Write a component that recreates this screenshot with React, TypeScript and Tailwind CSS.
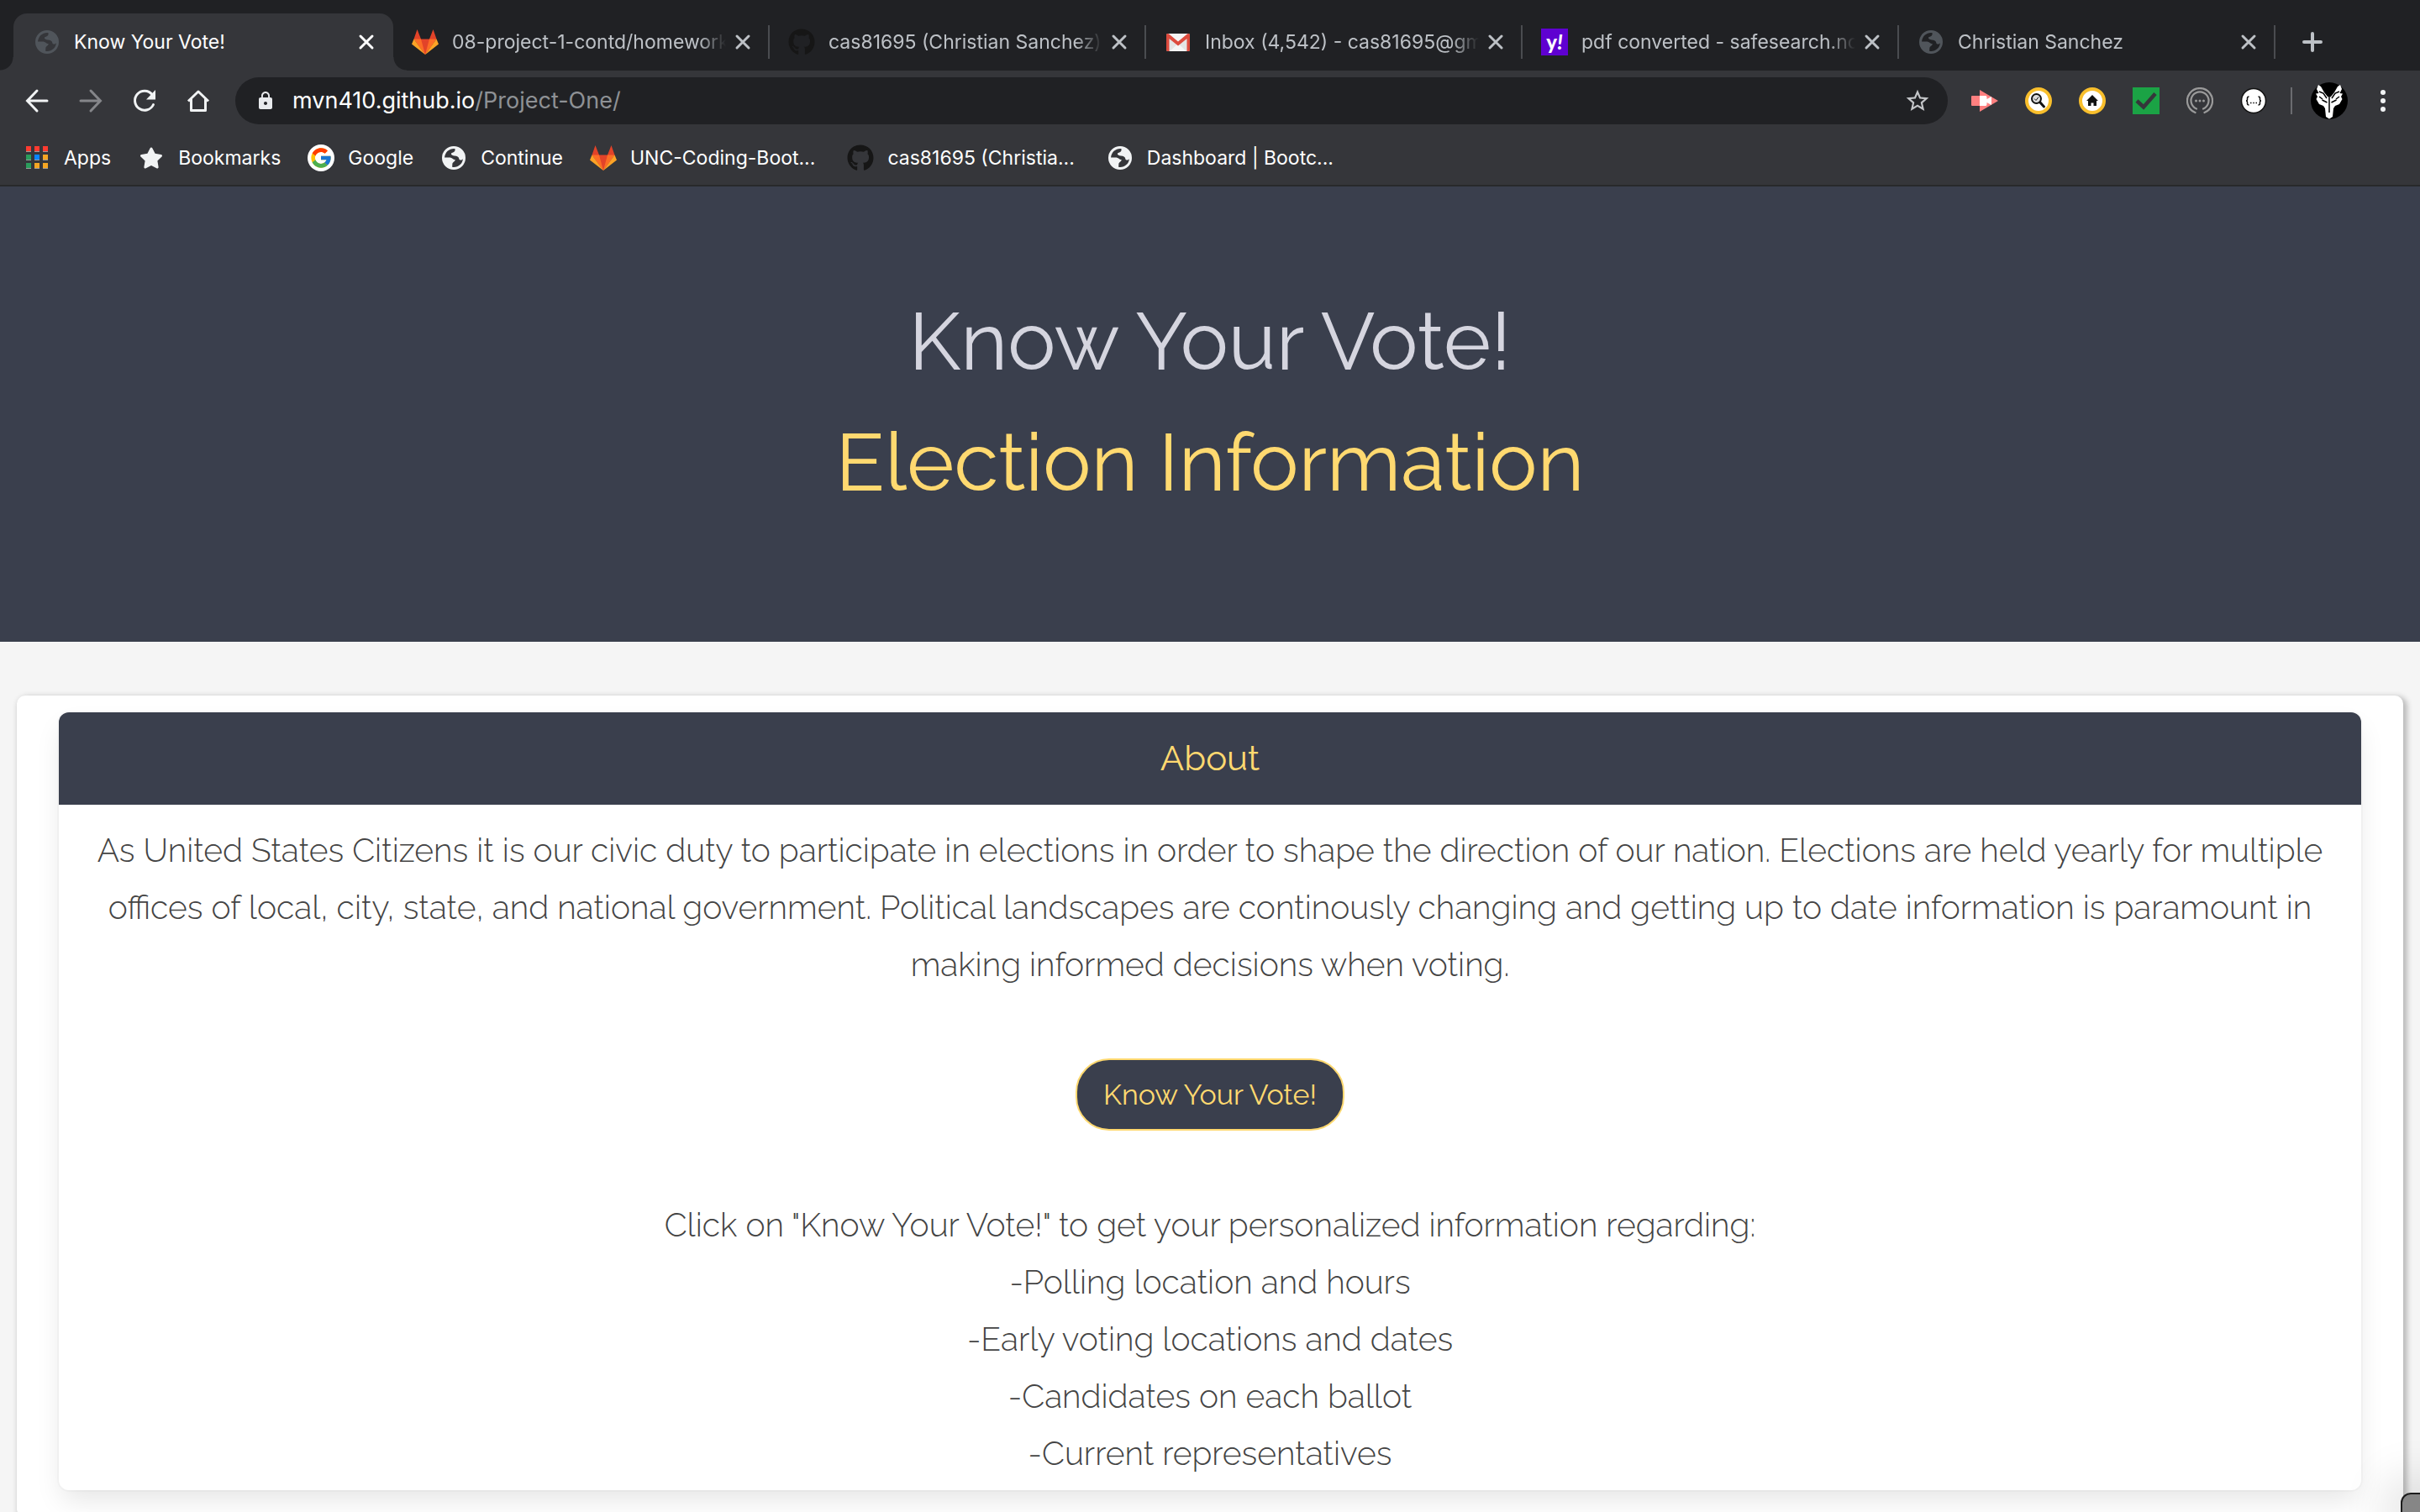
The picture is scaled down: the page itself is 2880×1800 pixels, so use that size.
import type { ReactNode } from "react";
import { FaGithub, FaStar } from "react-icons/fa";
import { FcGoogle } from "react-icons/fc";
import { MdLock, MdStarBorder } from "react-icons/md";

function Globe({ className }: { className: string }) {
  return (
    <svg viewBox="0 0 24 24" className={className} aria-hidden="true">
      <path
        fill="currentColor"
        fillRule="evenodd"
        d="M12 0a12 12 0 1 0 0 24 12 12 0 0 0 0-24zM13.2 2.6C8 2 3.200 5.600 2.600 11.500H7.500C10.500 11.500 11 13.600 13.400 13.800C13.800 15.600 10.800 16.200 10.600 18.200L10.400 21.200C16 22.200 21 18.200 21.400 12.800C20.500 14.600 17.600 14.600 17.400 12.800C17.200 10.800 15.400 10 12.800 9.800C9 9.500 8.400 7 10.800 6.600C12.800 6.300 13.800 4.600 13.200 2.600z"
      />
    </svg>
  );
}

function Gitlab() {
  return (
    <svg viewBox="0 0 32 32" className="size-8" aria-hidden="true">
      <path fill="#e24329" d="M6.500 1 11 12.500H21L25.500 1 29.500 12.500 16 31 2.500 12.500z" />
      <path fill="#fc6d26" d="M2.500 12.500H11L16 31zM29.500 12.500H21L16 31z" />
      <path fill="#fca326" d="M2.500 12.500 0 18.500 16 31zM29.500 12.500 32 18.500 16 31z" />
    </svg>
  );
}

function Gmail() {
  return (
    <svg viewBox="0 0 32 32" className="size-8" aria-hidden="true">
      <rect x="2" y="6" width="28" height="21" rx="2" fill="#e4e4e4" />
      <path d="M6 27 16 18 26 27z" fill="#f5f5f5" />
      <path d="M4 6H28L16 16z" fill="#f5f5f5" />
      <path d="M2 8C2 6 4 5.500 5.500 6.800L16 15.500 26.500 6.800C28 5.500 30 6 30 8V25.500Q30 27 28 27H26.500V12L16 20.500 5.500 12V27H4Q2 27 2 25.500z" fill="#dd4b3e" />
    </svg>
  );
}

function Yahoo() {
  return (
    <span className="flex size-8 items-center justify-center bg-[#5f01d1] font-['Lato',sans-serif] text-2xl leading-none font-black text-white">
      y<i>!</i>
    </span>
  );
}

function Cross() {
  return (
    <svg viewBox="0 0 32 32" className="size-8" aria-hidden="true">
      <path d="M9 9 23 23M23 9 9 23" stroke="currentColor" strokeWidth="3" strokeLinecap="round" />
    </svg>
  );
}

function AppsGrid() {
  const colors = ["#ff3b30", "#ff3b30", "#ff3b30", "#2a9d5c", "#0a84ff", "#f5a623", "#2a9d5c", "#f5a623", "#f5a623"];
  return (
    <svg viewBox="0 0 32 32" className="size-8" aria-hidden="true">
      {colors.map((c, i) => (
        <g key={i}>
          <rect x={3 + (i % 3) * 10} y={2 + Math.floor(i / 3) * 10} width="6" height="7" fill="#9a9a9a" />
          <rect x={3 + (i % 3) * 10} y={2 + Math.floor(i / 3) * 10} width="6" height="6" fill={c} />
        </g>
      ))}
    </svg>
  );
}

function TabItem({ icon, title }: { icon: ReactNode; title: string }) {
  return (
    <div className="flex h-full min-w-0 flex-1 items-center py-4">
      <div className="flex h-10 min-w-0 flex-1 items-center border-r-2 border-[#4a4c50] pr-3.5 pl-[22px] text-[#bdc1c6]">
        <span className="shrink-0">{icon}</span>
        <a href="#" className="ml-4 min-w-0 flex-1 overflow-hidden mask-r-from-90% whitespace-nowrap">
          {title}
        </a>
        <button type="button" aria-label={"Close " + title} className="ml-1 shrink-0">
          <Cross />
        </button>
      </div>
    </div>
  );
}

function TabStrip() {
  return (
    <div className="flex h-[84px] shrink-0 items-end bg-[#202124] pl-4 text-[23px]">
      <div className="relative flex h-[68px] w-[452px] shrink-0 items-center rounded-t-2xl bg-[#35363a] pr-4 pl-6 text-white">
        <span className="absolute bottom-0 -left-4 size-4 bg-[radial-gradient(circle_at_0_0,#202124_15px,#35363a_16px)]" />
        <span className="absolute -right-4 bottom-0 size-4 bg-[radial-gradient(circle_at_100%_0,#202124_15px,#35363a_16px)]" />
        <span className="flex size-8 items-center justify-center">
          <Globe className="size-7 text-[#50555b]" />
        </span>
        <a href="#" className="ml-4 flex-1">Know Your Vote!</a>
        <button type="button" aria-label="Close Know Your Vote!">
          <Cross />
        </button>
      </div>
      <div className="flex h-[68px] max-w-[2240px] min-w-0 flex-1 items-center">
        <TabItem icon={<Gitlab />} title="08-project-1-contd/homework" />
        <TabItem icon={<FaGithub className="size-8 text-[#161616]" />} title="cas81695 (Christian Sanchez)" />
        <TabItem icon={<Gmail />} title="Inbox (4,542) - cas81695@gm" />
        <TabItem icon={<Yahoo />} title="pdf converted - safesearch.no" />
        <TabItem
          icon={
            <span className="flex size-8 items-center justify-center">
              <Globe className="size-7 text-[#50555b]" />
            </span>
          }
          title="Christian Sanchez"
        />
      </div>
      <button type="button" aria-label="New tab" className="ml-7 flex h-[68px] items-center text-[#bdc1c6]">
        <svg viewBox="0 0 32 32" className="size-8" aria-hidden="true">
          <path d="M16 6V26M6 16H26" stroke="currentColor" strokeWidth="4" strokeLinecap="round" />
        </svg>
      </button>
    </div>
  );
}

function NavIcon({ label, dim, children }: { label: string; dim?: boolean; children: ReactNode }) {
  return (
    <button type="button" aria-label={label} className={dim ? "text-[#85868a]" : "text-[#f1f3f4]"}>
      <svg viewBox="0 0 32 32" className="size-8" fill="none" stroke="currentColor" strokeWidth="3" aria-hidden="true">
        {children}
      </svg>
    </button>
  );
}

function Ext({ label, children }: { label: string; children: ReactNode }) {
  return (
    <button type="button" aria-label={label}>
      <svg viewBox="0 0 32 32" className="size-8" aria-hidden="true">
        {children}
      </svg>
    </button>
  );
}

function Toolbar() {
  return (
    <div className="flex h-[72px] shrink-0 items-center px-7">
      <div className="flex shrink-0 gap-8">
        <NavIcon label="Back">
          <path d="M28 16H5M16 4 4.500 16 16 28" strokeLinecap="round" />
        </NavIcon>
        <NavIcon label="Forward" dim>
          <path d="M4 16H27M16 4 27.500 16 16 28" strokeLinecap="round" />
        </NavIcon>
        <NavIcon label="Reload">
          <path d="M26.500 20.500A11.500 11.500 0 1 1 25 8.500" strokeLinecap="round" />
          <path d="M29 3V14.500H18z" fill="currentColor" stroke="none" />
        </NavIcon>
        <NavIcon label="Home">
          <path d="M4 16.500 16 5 28 16.500M7.500 14V27.500H24.500V14" strokeLinejoin="round" />
        </NavIcon>
      </div>
      <div className="ml-7 flex h-14 min-w-0 flex-1 items-center rounded-full bg-[#202124] px-5">
        <span className="flex size-8 shrink-0 items-center justify-center">
          <MdLock className="size-6 text-[#e8eaed]" />
        </span>
        <a href="#" className="ml-4 flex-1 text-[27px] text-[#8e9195]">
          <span className="text-white">mvn410.github.io</span>/Project-One/
        </a>
        <button type="button" aria-label="Bookmark this page">
          <MdStarBorder className="size-8 text-[#c4c6c9]" />
        </button>
      </div>
      <div className="ml-7 flex shrink-0 items-center gap-8">
        <Ext label="Screen recorder">
          <path d="M10 3 32 16 10 29z" fill="#ff8080" />
          <path d="M1 10H10V22H1Q0 22 0 21V11Q0 10 1 10z" fill="#ff8080" />
          <path d="M10 10H17Q18.500 10 18.500 12V14L24 11V21L18.500 18V20Q18.500 22 17 22H10z" fill="#fff" />
        </Ext>
        <Ext label="Safe search">
          <circle cx="16" cy="16" r="14" fill="#fff" stroke="#f9bf2c" strokeWidth="4" />
          <circle cx="13.500" cy="13.500" r="5.500" fill="#ddd" stroke="#111" strokeWidth="2" />
          <path d="M11 13.500 13 15.500 16 11.500" fill="none" stroke="#111" strokeWidth="1" />
          <path d="M18 18 22.500 23" stroke="#111" strokeWidth="3" strokeLinecap="round" />
        </Ext>
        <Ext label="Home page">
          <circle cx="16" cy="16" r="14" fill="#fff" stroke="#f9bf2c" strokeWidth="4" />
          <path d="M16 9 23 16H21V22H17.500V18.500H14.500V22H11V16H9z" fill="#111" />
        </Ext>
        <Ext label="Safe web">
          <path d="M0 0H32V32H0z" fill="#1ba345" />
          <path d="M5 16 13 23.500 27 7.500" fill="none" stroke="#35363a" strokeWidth="4.500" />
        </Ext>
        <Ext label="Messages">
          <g fill="none" stroke="#9a9a9a" strokeWidth="2.200" strokeLinecap="round">
            <path d="M10.500 30A15 15 0 1 1 21.500 30" />
            <path d="M12 25.500A10.500 10.500 0 1 1 20 25.500" />
          </g>
          <g fill="#9a9a9a">
            <circle cx="11.500" cy="16" r="1.500" />
            <circle cx="16" cy="16" r="1.500" />
            <circle cx="20.500" cy="16" r="1.500" />
          </g>
        </Ext>
        <Ext label="JSON viewer">
          <circle cx="16" cy="16" r="14.500" fill="#fff" stroke="#111" strokeWidth="1.500" />
          <g fill="none" stroke="#111" strokeWidth="1.500">
            <path d="M10.500 11Q8.500 11 8.500 13V14.500Q8.500 16 7 16 8.500 16 8.500 17.500V19Q8.500 21 10.500 21M21.500 11Q23.500 11 23.500 13V14.500Q23.500 16 25 16 23.500 16 23.500 17.500V19Q23.500 21 21.500 21" />
            <path d="M12 18.500H13.500M15.300 18.500H16.800M18.500 18.500H20" />
          </g>
        </Ext>
      </div>
      <span className="ml-7 h-8 w-[2px] shrink-0 bg-[#6b6c70]" />
      <button type="button" aria-label="Profile" className="ml-[22px] shrink-0">
        <svg viewBox="0 0 44 44" className="size-11" aria-hidden="true">
          <circle cx="22" cy="22" r="22" fill="#000" />
          <path
            fill="#fff"
            d="M9 3 12 5 16 12 20 17 22 18 24 17 28 12 32 5 35 3 37 8 34.500 13 38 13.500 36 17 37.500 20 34 26 29 28 27 31 26 41 22 43.500 18 41 17 31 15 28 10 26 6.500 20 8 17 6 13.500 9.500 13 7 8z"
          />
          <path
            fill="none"
            stroke="#000"
            strokeWidth="1.500"
            d="M22 18V36M10 11 15 13 19 19M34 11 29 13 25 19M13.500 21 19.500 24M30.500 21 24.500 24M10 17 14 20M34 17 30 20"
          />
        </svg>
      </button>
      <button type="button" aria-label="Menu" className="ml-[26px] shrink-0 text-[#f1f3f4]">
        <svg viewBox="0 0 32 32" className="size-8" fill="currentColor" aria-hidden="true">
          <circle cx="16" cy="6" r="3" />
          <circle cx="16" cy="16" r="3" />
          <circle cx="16" cy="26" r="3" />
        </svg>
      </button>
    </div>
  );
}

const bookmarks: { label: string; icon: ReactNode; long?: boolean }[] = [
  { label: "Apps", icon: <AppsGrid /> },
  { label: "Bookmarks", icon: <FaStar className="size-7 text-[#f1f3f4]" /> },
  {
    label: "Google",
    icon: (
      <span className="flex size-8 items-center justify-center rounded-full bg-white">
        <FcGoogle className="size-7" />
      </span>
    ),
  },
  { label: "Continue", icon: <Globe className="size-7 text-[#f1f3f4]" /> },
  { label: "UNC-Coding-Boot...", icon: <Gitlab />, long: true },
  { label: "cas81695 (Christia...", icon: <FaGithub className="size-8 text-[#161616]" />, long: true },
  { label: "Dashboard | Bootc...", icon: <Globe className="size-7 text-[#f1f3f4]" />, long: true },
];

function BookmarksBar() {
  return (
    <nav aria-label="Bookmarks" className="flex h-[66px] shrink-0 items-center gap-8 border-b-2 border-[#28292b] px-7 text-[23px] text-white">
      {bookmarks.map((b) => (
        <a
          key={b.label}
          href="#"
          className={b.long ? "flex items-center gap-4 pr-1.5 whitespace-nowrap" : "flex items-center gap-4 whitespace-nowrap"}
        >
          <span className="flex size-8 items-center justify-center">{b.icon}</span>
          {b.label}
        </a>
      ))}
    </nav>
  );
}

const topics = [
  "-Polling location and hours",
  "-Early voting locations and dates",
  "-Candidates on each ballot",
  "-Current representatives",
];

export default function App() {
  return (
    <div className="relative flex h-screen flex-col overflow-hidden bg-[#f5f5f5]">
      <header className="flex shrink-0 flex-col bg-[#35363a] font-['Inter',sans-serif]">
        <TabStrip />
        <Toolbar />
        <BookmarksBar />
      </header>
      <main className="font-['Raleway','Lato',sans-serif]">
        <section className="bg-[#3a3f4d] pt-28 pb-[142px] text-center text-8xl leading-[144px]">
          <h1 className="text-[#d5d5df]">Know Your Vote!</h1>
          <h2 className="text-[#ffd970]">Election Information</h2>
        </section>
        <section className="mx-5 mt-16 rounded-[10px] bg-white px-[50px] pt-5 pb-8 shadow-[3px_3px_6px_2px_#bbbbbb]">
          <article className="rounded-xl bg-white text-center text-[#444444] shadow-[0_16px_32px_-4px_rgba(10,10,10,0.1),0_0_0_2px_rgba(10,10,10,0.02)]">
            <h3 className="rounded-t-xl bg-[#3a3f4d] text-[42px] leading-[110px] text-[#ffd970]">About</h3>
            <div className="px-8 pt-5 pb-2.5 text-[39px] leading-[68px] font-[320]">
              <p>
                As United States Citizens it is our civic duty to participate in elections in order to shape the direction
                of our nation. Elections are held yearly for multiple offices of local, city, state, and national
                government. Political landscapes are continously changing and getting up to date information is
                paramount in making informed decisions when voting.
              </p>
              <button
                type="button"
                className="my-[78px] h-[86px] w-80 rounded-[40px] border-2 border-[#ffd970] bg-[#3a3f4d] text-[34px] leading-none font-normal text-[#ffd970]"
              >
                Know Your Vote!
              </button>
              <p>Click on "Know Your Vote!" to get your personalized information regarding:</p>
              <ul>
                {topics.map((t) => (
                  <li key={t}>{t}</li>
                ))}
              </ul>
            </div>
          </article>
        </section>
      </main>
      <div className="absolute -right-2 -bottom-2 h-[31px] w-[31px] rounded-tl-xl border-2 border-[#1c1c1c] bg-[#868686] shadow-[0_0_60px_10px_rgba(0,0,0,0.2)]" />
    </div>
  );
}
